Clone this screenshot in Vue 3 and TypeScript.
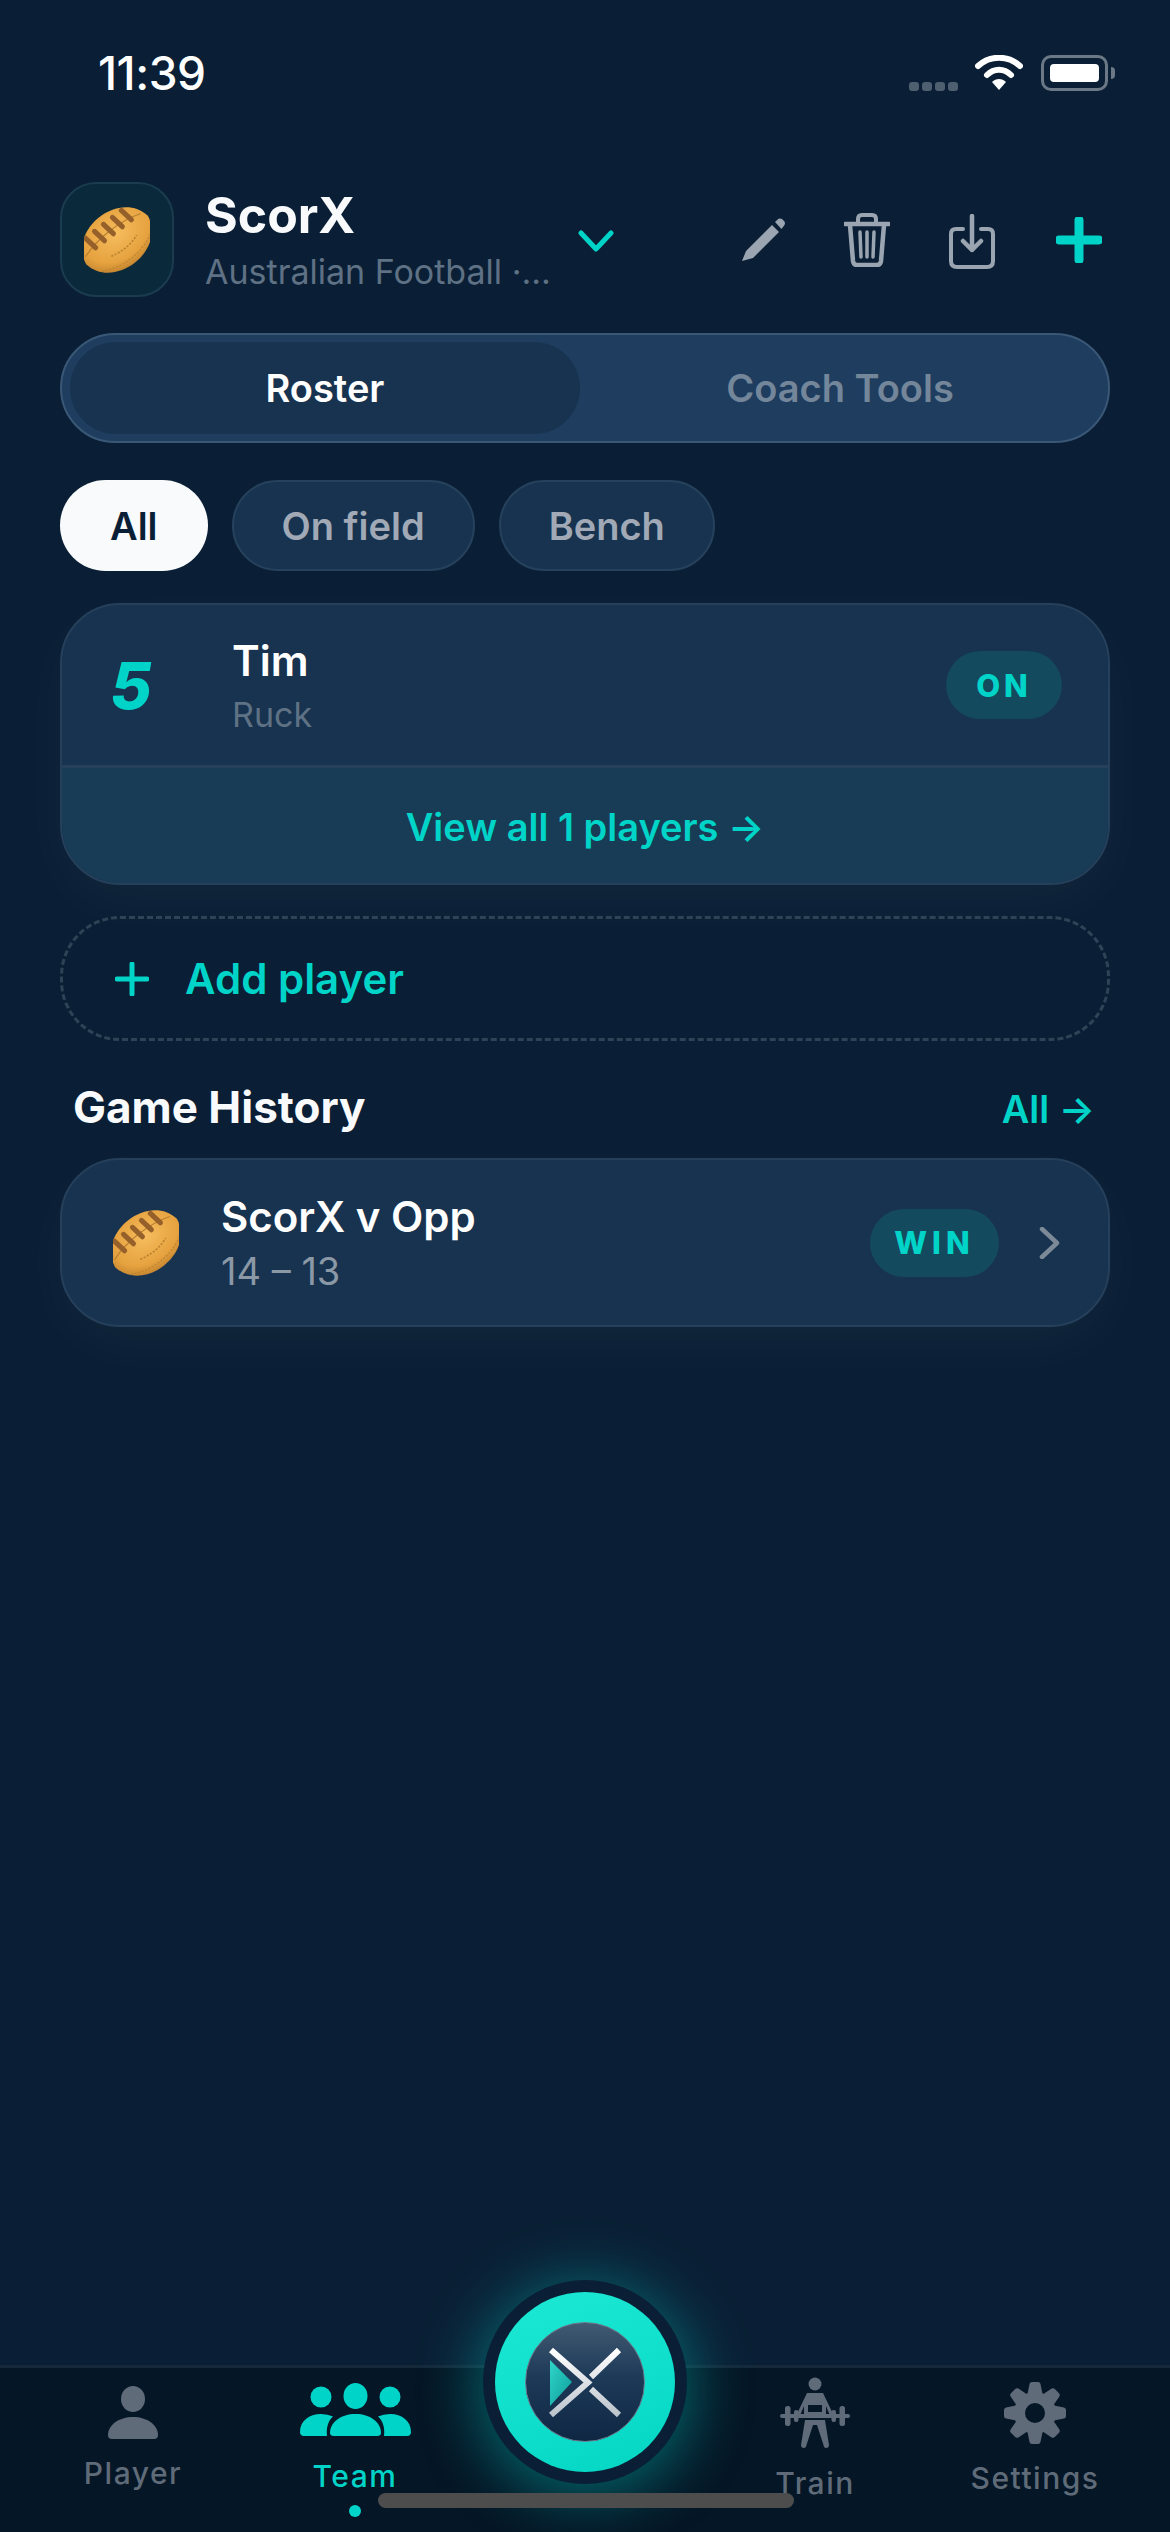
<script setup lang="ts">
// Static screen data
const chips = ['All', 'On field', 'Bench']
const laces = [-22, -11, 0, 11, 22]
const gearTeeth = [0, 45, 90, 135, 180, 225, 270, 315]
</script>

<template>
  <div class="page">
    <!-- shared football drawing -->
    <svg class="defs" width="0" height="0" aria-hidden="true">
      <defs>
        <radialGradient id="ballFill" cx="0.55" cy="0.4" r="0.65">
          <stop offset="0" stop-color="#f6bd5e" />
          <stop offset="0.7" stop-color="#e6a23f" />
          <stop offset="1" stop-color="#bd7f2c" />
        </radialGradient>
        <symbol id="ball" viewBox="0 0 64 64">
          <g transform="translate(32 32) rotate(-38)">
            <path d="M-38 0C-35-19-17-28 0-28C17-28 35-19 38 0C35 19 17 28 0 28C-17 28-35 19-38 0Z" fill="url(#ballFill)" />
            <path d="M-34-6C-14-13 14-13 34-6" fill="none" stroke="#b8812f" stroke-width="1.2" />
            <path d="M-14 9C-4 12 8 12 18 8" fill="none" stroke="#b8812f" stroke-width="1.6" stroke-dasharray="2 1.5" />
            <path d="M-30 15C-12 25 12 25 30 15" fill="none" stroke="#b8812f" stroke-width="1" stroke-dasharray="2 1.5" />
            <line
              v-for="x in laces"
              :key="x"
              :x1="x - 1"
              y1="-20"
              :x2="x + 1"
              y2="-7"
              stroke="#96602a"
              stroke-width="5"
              stroke-linecap="round"
            />
          </g>
        </symbol>
      </defs>
    </svg>

    <div class="status">
      <span class="time">11:39</span>
      <div class="status-icons">
        <div class="signal"><i /><i /><i /><i /></div>
        <svg class="wifi" width="48" height="36" viewBox="0 0 48 36">
          <path d="M3 11C15 0 33 0 45 11" fill="none" stroke="#fff" stroke-width="6" stroke-linecap="round" />
          <path d="M12 20C19 13 29 13 36 20" fill="none" stroke="#fff" stroke-width="6" stroke-linecap="round" />
          <path d="M17 27C21 23 27 23 31 27L24 35Z" fill="#fff" />
        </svg>
        <div class="battery"><span /></div>
        <div class="battery-tip" />
      </div>
    </div>

    <header class="team-head">
      <div class="crest"><svg class="ball"><use href="#ball" /></svg></div>
      <div class="team-text">
        <div class="team-name">ScorX</div>
        <div class="team-sub">Australian Football ·...</div>
      </div>
      <svg class="chev" width="36" height="22" viewBox="0 0 36 22">
        <path d="M3 3L18 19L33 3" fill="none" stroke="#00d4c8" stroke-width="5" stroke-linecap="round" stroke-linejoin="round" />
      </svg>
      <div class="head-actions">
        <svg class="act-pen" width="44" height="44" viewBox="0 0 44 44">
          <path d="M0 43L4 33L30 7L37 14L11 40Z" fill="#9aa5b1" />
          <path d="M33 4L36.500 0.800Q38 0 40 1L42.500 3.500Q43.500 5 42.500 7L39.500 11Z" fill="#9aa5b1" />
        </svg>
        <svg class="act-trash" width="46" height="54" viewBox="0 0 46 54" fill="none" stroke="#9aa5b1">
          <path d="M1 11H45" stroke-width="4.500" stroke-linecap="round" />
          <path d="M14 10V6Q14 2 18 2H28Q32 2 32 6V10" stroke-width="4" />
          <path d="M6 12L9 48Q9.500 52 13 52H33Q36.500 52 37 48L40 12" stroke-width="4.500" />
          <path d="M16 19L17 44M23 19V44M30 19L29 44" stroke-width="3.500" stroke-linecap="round" />
        </svg>
        <svg class="act-save" width="46" height="55" viewBox="0 0 46 55" fill="none" stroke="#9aa5b1" stroke-linecap="round" stroke-linejoin="round">
          <path d="M14 15H7Q2 15 2 20V47Q2 53 8 53H38Q44 53 44 47V20Q44 15 39 15H32" stroke-width="4" />
          <path d="M23 2V36M14 27L23 36L32 27" stroke-width="4.500" />
        </svg>
        <svg class="act-add" width="46" height="46" viewBox="0 0 46 46">
          <path d="M23 3V43M3 23H43" stroke="#00d4c8" stroke-width="9" stroke-linecap="round" />
        </svg>
      </div>
    </header>

    <div class="tabs">
      <div class="tab active">Roster</div>
      <div class="tab">Coach Tools</div>
    </div>

    <div class="chips">
      <div v-for="(chip, i) in chips" :key="chip" :class="['chip', { on: i === 0 }]">{{ chip }}</div>
    </div>

    <section class="card roster">
      <div class="player-row">
        <span class="num">5</span>
        <div class="player-text">
          <div class="player-name">Tim</div>
          <div class="player-pos">Ruck</div>
        </div>
        <span class="pill pill-on">ON</span>
      </div>
      <div class="view-all">View all 1 players →</div>
    </section>

    <div class="add-player">
      <svg width="34" height="34" viewBox="0 0 34 34">
        <path d="M17 2V32M2 17H32" stroke="#00d4c8" stroke-width="5" stroke-linecap="round" />
      </svg>
      <span>Add player</span>
    </div>

    <div class="section-head">
      <h2>Game History</h2>
      <span>All →</span>
    </div>

    <section class="card game">
      <svg class="ball game-ball"><use href="#ball" /></svg>
      <div class="game-text">
        <div class="game-title">ScorX v Opp</div>
        <div class="game-score">14 – 13</div>
      </div>
      <span class="pill pill-win">WIN</span>
      <svg class="game-go" width="22" height="32" viewBox="0 0 22 32">
        <path d="M3 2L18 16L3 30" fill="none" stroke="#7c8a98" stroke-width="4.500" stroke-linecap="round" stroke-linejoin="round" />
      </svg>
    </section>

    <nav class="nav">
      <div class="nav-item player">
        <svg width="50" height="53" viewBox="0 0 50 53" fill="#5f6b78">
          <ellipse cx="25" cy="13" rx="12" ry="13" />
          <path d="M0 49C0 39 11 31 25 31C39 31 50 39 50 49Q50 53 46 53H4Q0 53 0 49Z" />
        </svg>
        <span>Player</span>
      </div>
      <div class="nav-item team">
        <svg width="111" height="54" viewBox="0 0 111 54" fill="#00d4c8">
          <ellipse cx="55.500" cy="13" rx="12" ry="13" />
          <circle cx="21" cy="14" r="10.500" />
          <circle cx="90" cy="14" r="10.500" />
          <path d="M30 50C30 39 41 31 55.500 31C70 31 81 39 81 50Q81 53 77 53H34Q30 53 30 50Z" />
          <path d="M0 49C0 38 9 31 21 31Q28 31 33 33.500C28 38 26 45 27 53H4Q0 53 0 49Z" />
          <path d="M111 49C111 38 102 31 90 31Q83 31 78 33.500C83 38 85 45 84 53H107Q111 53 111 49Z" />
        </svg>
        <span>Team</span>
        <i class="nav-dot" />
      </div>
      <div class="nav-gap" />
      <div class="nav-item train">
        <svg width="70" height="71" viewBox="0 0 70 71" fill="#5f6b78">
          <circle cx="35" cy="7" r="6.500" />
          <path fill-rule="evenodd" d="M27 16H43L55 41H51L46 29V37H24V29L19 41H15ZM28 28V35H42V28Z" />
          <rect x="0" y="37" width="70" height="4" rx="2" />
          <rect x="5" y="29" width="5.500" height="20" rx="2.500" />
          <rect x="59.500" y="29" width="5.500" height="20" rx="2.500" />
          <rect x="14" y="33" width="4.500" height="12" rx="2" />
          <rect x="51.500" y="33" width="4.500" height="12" rx="2" />
          <path d="M25 43H45L49 68Q49 71 46 71Q44 71 43.500 68L37 48H33L26.500 68Q26 71 24 71Q21 71 21 68Z" />
        </svg>
        <span>Train</span>
      </div>
      <div class="nav-item settings">
        <svg width="62" height="62" viewBox="0 0 62 62" fill="#5f6b78">
          <path
            v-for="deg in gearTeeth"
            :key="deg"
            d="M23.500 12L25.500 2Q26 0 28 0H34Q36 0 36.500 2L38.500 12Z"
            :transform="`rotate(${deg} 31 31)`"
          />
          <circle cx="31" cy="31" r="15.500" fill="none" stroke="#5f6b78" stroke-width="11" />
        </svg>
        <span>Settings</span>
      </div>

      <!-- raised centre button -->
      <div class="fab">
        <div class="fab-teal">
          <div class="fab-disc">
            <svg width="118" height="118" viewBox="0 0 118 118">
              <defs>
                <linearGradient id="triFill" x1="0" y1="0" x2="1" y2="1">
                  <stop offset="0" stop-color="#2fd6c8" />
                  <stop offset="1" stop-color="#0f9c9c" />
                </linearGradient>
                <linearGradient id="steel" x1="0" y1="0" x2="0" y2="1">
                  <stop offset="0" stop-color="#ffffff" />
                  <stop offset="1" stop-color="#bcc4cc" />
                </linearGradient>
              </defs>
              <path d="M24 37L46 59L24 83Z" fill="url(#triFill)" />
              <path d="M25 27L62 59.500L25 92" fill="none" stroke="url(#steel)" stroke-width="6" stroke-linejoin="miter" />
              <path d="M65 54L93 27M65 66L93 92" stroke="url(#steel)" stroke-width="6" fill="none" />
            </svg>
          </div>
        </div>
      </div>
      <div class="home-bar" />
    </nav>
  </div>
</template>

<style>
html,
body {
  margin: 0;
  background: #0a1f35;
}
</style>

<style scoped>
.page {
  position: relative;
  display: flex;
  flex-direction: column;
  width: 1170px;
  height: 2532px;
  overflow: hidden;
  background: #0a1f35;
  font-family: Inter, 'Liberation Sans', sans-serif;
  color: #fff;
}
.defs {
  position: absolute;
}
.ball {
  width: 66px;
  height: 66px;
}

/* Status bar */
.status {
  display: flex;
  align-items: center;
  justify-content: space-between;
  height: 146px;
  padding: 0 55px 0 98px;
  flex: none;
}
.time {
  font-size: 46px;
  font-weight: 500;
  letter-spacing: -0.5px;
}
.status-icons {
  display: flex;
  align-items: center;
}
.signal {
  display: flex;
  gap: 3px;
  margin: 26px 17px 0 0;
}
.signal i {
  width: 10px;
  height: 9px;
  border-radius: 3px;
  background: #4e5f70;
}
.wifi {
  margin-right: 18px;
}
.battery {
  box-sizing: border-box;
  width: 67px;
  height: 36px;
  padding: 6px;
  border: 3px solid #6b7886;
  border-radius: 10px;
}
.battery span {
  display: block;
  width: 100%;
  height: 100%;
  border-radius: 4px;
  background: #fff;
}
.battery-tip {
  width: 4px;
  height: 12px;
  margin-left: 3px;
  border-radius: 0 4px 4px 0;
  background: #6b7886;
}

/* Team header */
.team-head {
  display: flex;
  align-items: center;
  flex: none;
  height: 115px;
  margin-top: 36px;
  padding: 0 68px 0 60px;
}
.crest {
  box-sizing: border-box;
  display: flex;
  align-items: center;
  justify-content: center;
  width: 114px;
  height: 115px;
  border: 2px solid #1b3b4e;
  border-radius: 36px;
  background: #0a2a3c;
}
.team-text {
  width: 373px;
  margin-left: 31px;
}
.team-name {
  font-size: 50px;
  font-weight: 700;
  line-height: 60px;
  color: #f8fafc;
}
.team-sub {
  margin-top: 5px;
  font-size: 34px;
  line-height: 44px;
  color: #5f7184;
  white-space: nowrap;
}
.chev {
  margin-top: 2px;
}
.head-actions {
  display: flex;
  align-items: center;
  margin-left: auto;
}
.act-pen {
  margin-right: 58px;
}
.act-trash {
  margin-right: 59px;
}
.act-save {
  margin-right: 61px;
  margin-top: 3px;
}

/* Segmented tabs */
.tabs {
  box-sizing: border-box;
  display: flex;
  flex: none;
  height: 110px;
  margin: 36px 60px 0;
  padding: 7px 8px;
  border: 2px solid #3a5776;
  border-radius: 55px;
  background: #1e3d5f;
}
.tab {
  display: flex;
  align-items: center;
  justify-content: center;
  flex: 1;
  font-size: 38px;
  font-weight: 600;
  color: #74869a;
}
.tab.active {
  flex: none;
  width: 510px;
  border-radius: 46px;
  background: #17334f;
  color: #fff;
}

/* Filter chips */
.chips {
  display: flex;
  flex: none;
  gap: 24px;
  height: 91px;
  margin: 37px 60px 0;
}
.chip {
  box-sizing: border-box;
  display: flex;
  align-items: center;
  padding: 0 48px;
  border: 2px solid #26415c;
  border-radius: 46px;
  background: #17334f;
  font-size: 38px;
  font-weight: 600;
  color: #a0a9b5;
}
.chip.on {
  padding: 0 50px;
  border: 0;
  background: #f8fafc;
  color: #0a1f35;
}

/* Cards */
.card {
  box-sizing: border-box;
  flex: none;
  margin-left: 60px;
  margin-right: 60px;
  border: 2px solid #263f5a;
  border-radius: 60px;
  background: #17334f;
  box-shadow: 0 18px 60px rgba(255, 255, 255, 0.035);
}
.roster {
  height: 282px;
  margin-top: 32px;
  overflow: hidden;
}
.player-row {
  box-sizing: border-box;
  display: flex;
  align-items: center;
  height: 163px;
  padding: 0 46px 0 48px;
  border-bottom: 3px solid #263f5a;
}
.num {
  width: 122px;
  font-size: 64px;
  font-weight: 800;
  font-style: italic;
  color: #00d4c8;
}
.player-name {
  font-size: 42px;
  font-weight: 600;
  line-height: 52px;
}
.player-pos {
  margin-top: 7px;
  font-size: 34px;
  line-height: 42px;
  color: #5f7184;
}
.pill {
  display: flex;
  align-items: center;
  justify-content: center;
  height: 68px;
  border-radius: 34px;
  background: #144a5e;
  font-size: 31px;
  font-weight: 800;
  color: #00d4c8;
}
.pill-on {
  width: 116px;
  margin-left: auto;
  letter-spacing: 4px;
}
.view-all {
  display: flex;
  align-items: center;
  justify-content: center;
  height: 117px;
  background: #183c55;
  font-size: 38px;
  font-weight: 600;
  color: #00d4c8;
}
.add-player {
  box-sizing: border-box;
  display: flex;
  align-items: center;
  gap: 36px;
  flex: none;
  height: 125px;
  margin: 31px 60px 0;
  padding-left: 52px;
  border: 3px dashed #2f4256;
  border-radius: 60px;
  font-size: 42px;
  font-weight: 600;
  color: #00d4c8;
}
.section-head {
  display: flex;
  align-items: center;
  justify-content: space-between;
  flex: none;
  height: 52px;
  margin-top: 40px;
  padding: 0 75px 0 73px;
}
.section-head h2 {
  margin: 0;
  font-size: 44px;
  font-weight: 700;
  color: #f8fafc;
}
.section-head span {
  margin-top: 4px;
  font-size: 38px;
  font-weight: 600;
  color: #00d4c8;
}
.game {
  display: flex;
  align-items: center;
  height: 169px;
  margin-top: 25px;
  padding-left: 51px;
}
.game-text {
  margin-left: 42px;
}
.game-title {
  font-size: 42px;
  font-weight: 600;
  line-height: 52px;
}
.game-score {
  margin-top: 5px;
  font-size: 38px;
  line-height: 46px;
  color: #8b98a6;
}
.pill-win {
  width: 129px;
  margin-left: auto;
  letter-spacing: 5px;
}
.game-go {
  margin: 0 47px 0 40px;
}

/* Bottom navigation */
.nav {
  position: relative;
  display: grid;
  grid-template-columns: 220px 224px 236px 224px 216px;
  box-sizing: border-box;
  flex: none;
  height: 167px;
  margin-top: auto;
  padding-left: 23px;
  border-top: 3px solid #15293b;
  background: #051626;
}
.nav-item {
  display: flex;
  flex-direction: column;
  align-items: center;
  font-size: 30px;
  font-weight: 500;
  letter-spacing: 1.5px;
  line-height: 36px;
  color: #5f6b78;
}
.nav-item.player {
  padding-top: 18px;
}
.player span {
  margin-top: 16px;
}
.nav-item.team {
  padding-top: 15px;
  color: #00d4c8;
}
.team span {
  margin-top: 21px;
}
.nav-dot {
  width: 12px;
  height: 12px;
  margin-top: 11px;
  border-radius: 50%;
  background: #00d4c8;
}
.nav-item.train {
  padding-top: 9px;
}
.train span {
  margin-top: 17px;
}
.nav-item.settings {
  padding-top: 14px;
}
.settings span {
  margin-top: 16px;
}
.fab {
  position: absolute;
  left: 483px;
  top: -88px;
  display: flex;
  align-items: center;
  justify-content: center;
  width: 204px;
  height: 204px;
  border-radius: 50%;
  background: #0a1f35;
  box-shadow: 0 8px 60px 6px rgba(0, 212, 200, 0.42);
}
.fab-teal {
  display: flex;
  align-items: center;
  justify-content: center;
  width: 180px;
  height: 180px;
  border-radius: 50%;
  background: linear-gradient(160deg, #1ce9d4, #04d6c4);
}
.fab-disc {
  box-sizing: border-box;
  display: flex;
  align-items: center;
  justify-content: center;
  width: 120px;
  height: 120px;
  border: 1px solid #6b7a8c;
  border-radius: 50%;
  background: linear-gradient(180deg, #425a72, #1d3a58 45%, #0f2743);
}
.home-bar {
  position: absolute;
  left: 378px;
  top: 125px;
  width: 416px;
  height: 15px;
  border-radius: 8px;
  background: #4d4d4d;
}
</style>
